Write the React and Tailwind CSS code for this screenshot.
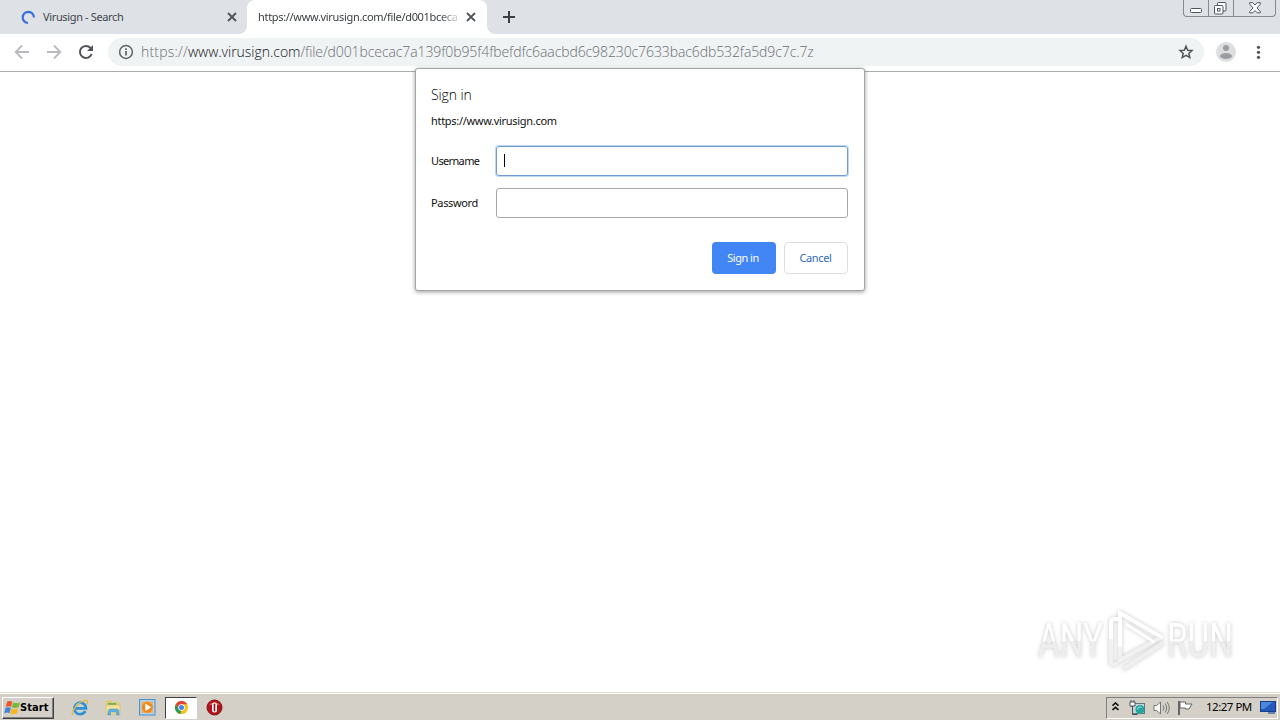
import React from "react";

const ui = "font-['Noto_Sans','DejaVu_Sans',sans-serif]";

const CloseIcon = () => (
  <svg width="10" height="10" viewBox="0 0 10 10" fill="none" stroke="#50545a" strokeWidth="1.800">
    <path d="M1 1l8 8M9 1L1 9" />
  </svg>
);

const WindowsFlag = () => (
  <svg width="17" height="16" viewBox="0 0 17 16">
    <path d="M3.2 1.6C5 .5 6.800.8 8.300 1.800L7 7C5.500 6 3.600 6 1.800 6.900z" fill="#e8562a" />
    <path d="M9 2.200c2 1.200 4.500 1.200 7 0L14.500 7.300c-2.200 1-4.700 1-6.700 0z" fill="#7cb83a" />
    <path d="M1.600 7.800c2-1 3.700-.8 5.200.2L5.400 13.200c-1.600-1-3.400-1-5.200 0z" fill="#3f85d8" />
    <path d="M7.500 8.300c2 1.100 4.500 1.200 6.800.1L12.800 13.600c-2.300 1.100-4.700 1-6.700-.2z" fill="#f5b824" />
  </svg>
);

const IeIcon = () => (
  <svg width="18" height="18" viewBox="0 0 18 18" fill="none">
    <path d="M14.300 12.200A5.800 5.800 0 1 1 15 9.300H5" stroke="#2d91d8" strokeWidth="2.700" />
    <path d="M4.500 6.600A5 5 0 0 1 9 4" stroke="#8bd1f5" strokeWidth="1" />
    <path d="M2.200 15.800C-.5 14.500 3 8.500 8 4.600c4-3.100 8.300-4.300 8.700-2.200.2.800-.2 1.700-.8 2.700" stroke="#e7b93c" strokeWidth="1.300" />
  </svg>
);

const FolderIcon = () => (
  <svg width="18" height="18" viewBox="0 0 18 18">
    <path d="M2 3l1-1.500h4L8 3h7v11H2z" fill="#e6c964" />
    <path d="M4 4h8v3H4z" fill="#65b56d" />
    <path d="M2 6h14v9H2z" fill="#f7e49b" stroke="#d4b655" strokeWidth=".6" />
    <path d="M4 16v-3.500c0-1.500 1-2.500 2.500-2.500h6c1.500 0 2.500 1 2.500 2.500V16h-2.500v-3h-6v3z" fill="#61b2df" stroke="#3c8fc2" strokeWidth=".5" />
  </svg>
);

const MediaIcon = () => (
  <svg width="17" height="17" viewBox="0 0 17 17">
    <rect x=".5" y=".5" width="15.500" height="15.500" fill="#a9d3f0" stroke="#4d91c9" />
    <rect x="2.500" y="2.500" width="11.500" height="11.500" fill="#f0b263" />
    <circle cx="8.300" cy="8.300" r="5.500" fill="#ed8a1f" />
    <path d="M6.300 4.500l6 3.800-6 3.800z" fill="#fff" />
  </svg>
);

const ChromeIcon = () => (
  <svg width="15" height="15" viewBox="0 0 16 16">
    <circle cx="8" cy="8" r="7" fill="#fbc116" />
    <path d="M8 8L4.900 9.800 1.900 4.500A7 7 0 0 1 14.100 4.500H8z" fill="#dc4535" />
    <path d="M1.900 4.500L5 9.800 8 11.500 6.800 14.900A7 7 0 0 1 1.900 4.500z" fill="#279b55" />
    <circle cx="8" cy="8" r="3.500" fill="#fff" />
    <circle cx="8" cy="8" r="2.700" fill="#4285f4" />
  </svg>
);

const OperaIcon = () => (
  <svg width="17" height="17" viewBox="0 0 17 17">
    <circle cx="8.500" cy="8.500" r="7.500" fill="#b3141c" stroke="#821015" />
    <path d="M3 6a6 4 0 0 1 11 0" fill="#d65a58" />
    <rect x="6" y="3.500" width="5" height="10" rx="2.500" fill="#fff" />
    <rect x="7.700" y="4.500" width="1.600" height="8" rx=".8" fill="#991116" />
  </svg>
);

const WindowControls = () => (
  <div className="absolute right-[4px] top-0 flex h-[17px] w-[93px] rounded-b-[4px] border border-t-0 border-[#858990] bg-[#dee1e6]">
    <div className="flex w-[25px] justify-center border-r border-[#858990] pt-[8px]">
      <svg width="13" height="5" viewBox="0 0 13 5">
        <rect x=".5" y=".5" width="11" height="4" rx="1" fill="#fff" stroke="#50555f" />
      </svg>
    </div>
    <div className="flex w-[25px] justify-center border-r border-[#858990] pr-[2px] pt-[2px]">
      <svg width="13" height="13" viewBox="0 0 13 13" fill="#fff" stroke="#50555f">
        <rect x="3.500" y=".5" width="8.500" height="8.500" rx="1" />
        <rect x=".5" y="3.500" width="8.500" height="8.500" rx="1" />
        <rect x="3.500" y="6.500" width="2.500" height="2.500" />
      </svg>
    </div>
    <div className="flex flex-1 justify-center pt-[2px]">
      <svg width="12" height="12" viewBox="0 0 12 12">
        <path d="M.7.700h3.100L6 3 8.200.7h3.100v1.500L8 6l3.300 3.500v1.300H8.200L6 8.500 3.800 10.800H.7V9.500L4 6 .7 2.200z" fill="#fff" stroke="#50555f" />
      </svg>
    </div>
  </div>
);

const TabStrip = () => (
  <div className="relative flex h-[34px] bg-[#dee1e6] text-[11px]">
    <div className="flex w-[247px] items-center pl-[21px] pr-[10px] text-[#42464d]">
      <svg width="15" height="15" viewBox="0 0 15 15" fill="none" stroke="#3970dc" strokeWidth="2.200">
        <path d="M7 13A5.600 5.600 0 1 1 12.900 7.500" />
      </svg>
      <span className="ml-[7px] flex-1 whitespace-nowrap tracking-[-0.36px]">Virusign - Search</span>
      <CloseIcon />
    </div>
    <div className="relative flex w-[240px] items-center rounded-t-[8px] bg-white pl-[11px] pr-[11px] text-[#3c4043]">
      <svg className="absolute -left-[8px] bottom-0" width="8" height="8">
        <path d="M8 0v8H0a8 8 0 0 0 8-8" fill="#fff" />
      </svg>
      <span className="whitespace-nowrap tracking-[-0.32px] [mask-image:linear-gradient(to_right,black_182px,transparent_204px)]">
        https://www.virusign.com/file/d001bceca
      </span>
      <span className="ml-auto"><CloseIcon /></span>
      <svg className="absolute -right-[8px] bottom-0" width="8" height="8">
        <path d="M0 0v8h8a8 8 0 0 1-8-8" fill="#fff" />
      </svg>
    </div>
    <div className="flex items-center pl-[16px]">
      <svg width="12" height="12" viewBox="0 0 12 12" stroke="#3c4043" strokeWidth="2">
        <path d="M6 0v12M0 6h12" />
      </svg>
    </div>
    <WindowControls />
  </div>
);

const Toolbar = () => (
  <div className="flex h-[38px] items-center border-b border-[#aaabad] bg-white pb-[1px] pl-[14px]">
    <svg width="16" height="16" viewBox="0 0 16 16" fill="none" stroke="#b8babd" strokeWidth="1.800">
      <path d="M15 8H2M8 1.500L1.700 8 8 14.500" />
    </svg>
    <svg className="ml-[16px]" width="16" height="16" viewBox="0 0 16 16" fill="none" stroke="#b8babd" strokeWidth="1.800">
      <path d="M1 8h13M8 1.500L14.300 8 8 14.500" />
    </svg>
    <svg className="ml-[16px]" width="16" height="16" viewBox="0 0 16 16" fill="none">
      <path d="M13.600 10A6 6 0 1 1 12.400 3.900L14 5.500" stroke="#515458" strokeWidth="2" />
      <path d="M15 1v6H9z" fill="#515458" />
    </svg>
    <div className="ml-[14px] flex h-[28px] w-[1096px] items-center rounded-full bg-[#f0f3f4] pl-[10px] pr-[10px]">
      <svg width="16" height="16" viewBox="0 0 16 16" fill="none" stroke="#5f6368" strokeWidth="1.500">
        <circle cx="8" cy="8" r="6.400" />
        <path d="M8 7v4.500M8 4.300v1.600" strokeWidth="1.700" />
      </svg>
      <span className="ml-[7px] flex-1 whitespace-nowrap pb-[2px] font-['Open_Sans','Noto_Sans',sans-serif] text-[14px] font-light tracking-[-0.1px] text-[#6a6e73]">
        <span className="tracking-[0.2px]">https://</span>
        <span className="tracking-[-0.02px] text-[#111214]">www.virusign.com</span>/file/d001bcecac7a139f0b95f4fbefdfc6aacbd6c98230c7633bac6db532fa5d9c7c.7z
      </span>
      <svg width="16" height="16" viewBox="0 0 16 16" fill="none" stroke="#505458" strokeWidth="1.500">
        <path d="M8 2.200l1.700 4 4.300.3-3.200 2.900 1 4.200L8 11.400 4.200 13.600l1-4.200L2 6.500l4.300-.3z" />
      </svg>
    </div>
    <svg className="ml-[12px]" width="20" height="20" viewBox="0 0 20 20">
      <circle cx="10" cy="10" r="10" fill="#dcdee0" />
      <circle cx="10" cy="6" r="3" fill="#9b9da0" />
      <ellipse cx="10" cy="14" rx="6" ry="3" fill="#9b9da0" />
    </svg>
    <svg className="ml-[20px]" width="5" height="16" viewBox="0 0 5 16" fill="#505458">
      <circle cx="2.500" cy="3.300" r="1.600" />
      <circle cx="2.500" cy="8.300" r="1.600" />
      <circle cx="2.500" cy="13.300" r="1.600" />
    </svg>
  </div>
);

const SignInDialog = () => (
  <div className="absolute left-[415px] top-[68px] h-[223px] w-[450px] rounded-[3px] border border-[#a4a4a4] bg-white pl-[15px] pr-[16px] text-[11px] text-[#111] shadow-[0_1px_4px_rgba(0,0,0,0.4)]">
    <h1 className="mt-[16px] font-['Open_Sans',sans-serif] text-[14px] font-light leading-[20px] tracking-[-0.1px] text-black">Sign in</h1>
    <p className="mt-[8px] leading-[16px] tracking-[-0.3px]">https://www.virusign.com</p>
    <div className="mt-[17px] flex items-center">
      <span className="w-[65px] tracking-[-0.65px]">Username</span>
      <div className="flex h-[30px] flex-1 items-center rounded-[3px] border border-[#6f9bd0] pb-[1px] pl-[7px] shadow-[0_0_0_1px_#bfd7f2]">
        <span className="h-[13px] w-px bg-black"></span>
      </div>
    </div>
    <div className="mt-[12px] flex items-center">
      <span className="w-[65px] tracking-[-0.35px]">Password</span>
      <div className="h-[30px] flex-1 rounded-[3px] border border-[#a6a8ad]"></div>
    </div>
    <div className="mt-[24px] flex justify-end gap-[8px]">
      <button className="h-[32px] w-[64px] rounded-[4px] bg-[#4285f4] pr-[2px] tracking-[-0.5px] text-white">Sign in</button>
      <button className="h-[32px] w-[64px] rounded-[4px] border border-[#dcdee2] pr-[1px] tracking-[-0.35px] text-[#2e69bd]">Cancel</button>
    </div>
  </div>
);

const Watermark = () => (
  <div className="absolute left-[1038px] top-[609px] flex h-[64px] w-[200px] items-center [filter:drop-shadow(0_0_2px_rgba(0,0,0,0.22))]">
    <div className="w-[68px] shrink-0">
      <span className="block w-max origin-left scale-x-[0.68] bg-linear-to-b from-white from-50% to-[#eeeeee] to-50% bg-clip-text font-['Roboto',sans-serif] text-[49px] leading-[58px] text-transparent">ANY</span>
    </div>
    <svg className="shrink-0" width="60" height="64" viewBox="0 0 60 64" fill="none" strokeWidth="4">
      <path d="M12 10H8.500Q5 10 5 14v16" stroke="#fff" />
      <path d="M5 30v23q0 4 7 1" stroke="#f1f1f1" />
      <path d="M14 40V4l43 25" stroke="#fff" />
      <path d="M14 38v13l40-22" stroke="#f1f1f1" />
      <path d="M20 15l28 18" stroke="#fff" strokeWidth="3" />
      <path d="M57 34L17 60" stroke="#efefef" />
    </svg>
    <div className="ml-[1px] w-[66px] shrink-0">
      <span className="block w-max origin-left scale-x-[0.68] bg-linear-to-b from-white from-50% to-[#eeeeee] to-50% bg-clip-text font-['Roboto',sans-serif] text-[49px] leading-[58px] text-transparent">RUN</span>
    </div>
  </div>
);

const Taskbar = () => (
  <div className="flex h-[28px] items-center border-t border-[#e2dfd8] bg-[#d4d0c8] pl-[2px] pr-[2px] pt-[2px] shadow-[inset_0_1px_0_#fff]">
    <div className="flex h-[22px] w-[52px] items-center border border-b-[#404040] border-l-white border-r-[#404040] border-t-white pl-[1px] shadow-[inset_-1px_-1px_0_#808080]">
      <WindowsFlag />
      <span className="-ml-px pt-[1px] font-['DejaVu_Sans_Condensed','DejaVu_Sans',sans-serif] text-[11px] font-bold tracking-[0.1px] text-black">Start</span>
    </div>
    <div className="ml-[17px] flex items-center">
      <IeIcon />
      <span className="ml-[15px]"><FolderIcon /></span>
      <span className="ml-[17px]"><MediaIcon /></span>
      <div className="ml-[9px] flex h-[22px] w-[32px] items-center justify-center border border-b-white border-l-[#404040] border-r-white border-t-[#404040] bg-white">
        <ChromeIcon />
      </div>
      <span className="ml-[9px]"><OperaIcon /></span>
    </div>
    <div className="ml-auto flex h-[22px] w-[172px] items-center border border-b-white border-l-[#808080] border-r-white border-t-[#808080] pl-[5px]">
      <svg className="mb-[2px]" width="7" height="9" viewBox="0 0 7 9" fill="none" stroke="#111" strokeWidth="1.600">
        <path d="M.5 3.700l3-2.700 3 2.700M.5 8l3-2.700 3 2.700" />
      </svg>
      <svg className="ml-[10px]" width="17" height="16" viewBox="0 0 17 16">
        <rect x="3.500" y="3.500" width="12" height="10" fill="#c5d1d3" stroke="#61757a" />
        <path d="M1.500 2v4h2v8.500h5M2 0v2M5 0v2" fill="none" stroke="#4c5156" />
        <path d="M1 2h5v4H1z" fill="#fff" stroke="#4c5156" />
        <circle cx="11" cy="9.500" r="4.500" fill="#25a5a0" />
        <path d="M8.500 9.500a2.500 2.500 0 0 1 4-2" stroke="#a7eee5" fill="none" />
      </svg>
      <svg className="ml-[7px]" width="17" height="16" viewBox="0 0 17 16" fill="none" stroke="#777">
        <path d="M1 5.500h2.500L7.500 2v12L3.500 10.500H1z" fill="#f6f6f6" />
        <path d="M10 5.500a4 4 0 0 1 0 5M12 3.500a7 7 0 0 1 0 9M14 2a9 9 0 0 1 0 12" />
      </svg>
      <svg className="ml-[7px]" width="17" height="16" viewBox="0 0 17 16" fill="#fff" stroke="#666">
        <path d="M2 1v14" strokeWidth="2" />
        <path d="M3 2h5.500v2h6.500l-3 5H8.500V8H3z" />
      </svg>
      <span className="ml-[12px] w-[47px] whitespace-nowrap pb-[1px] text-[11.500px] tracking-[-0.5px] text-black">12:27 PM</span>
      <svg className="ml-[7px]" width="16" height="15" viewBox="0 0 16 15">
        <rect x=".5" y="1.500" width="15" height="10" fill="#2458bc" stroke="#183e88" />
        <path d="M1 2h12L4 9H1z" fill="#4b87dc" />
        <path d="M8 13h7" stroke="#6b84ad" strokeWidth="2" />
      </svg>
    </div>
  </div>
);

const App = () => {
  return (
    <div className={`relative flex h-[720px] w-[1280px] flex-col overflow-hidden bg-white ${ui}`}>
      <TabStrip />
      <Toolbar />
      <main className="flex-1 bg-white"></main>
      <Taskbar />
      <SignInDialog />
      <Watermark />
    </div>
  );
};

export default App;
